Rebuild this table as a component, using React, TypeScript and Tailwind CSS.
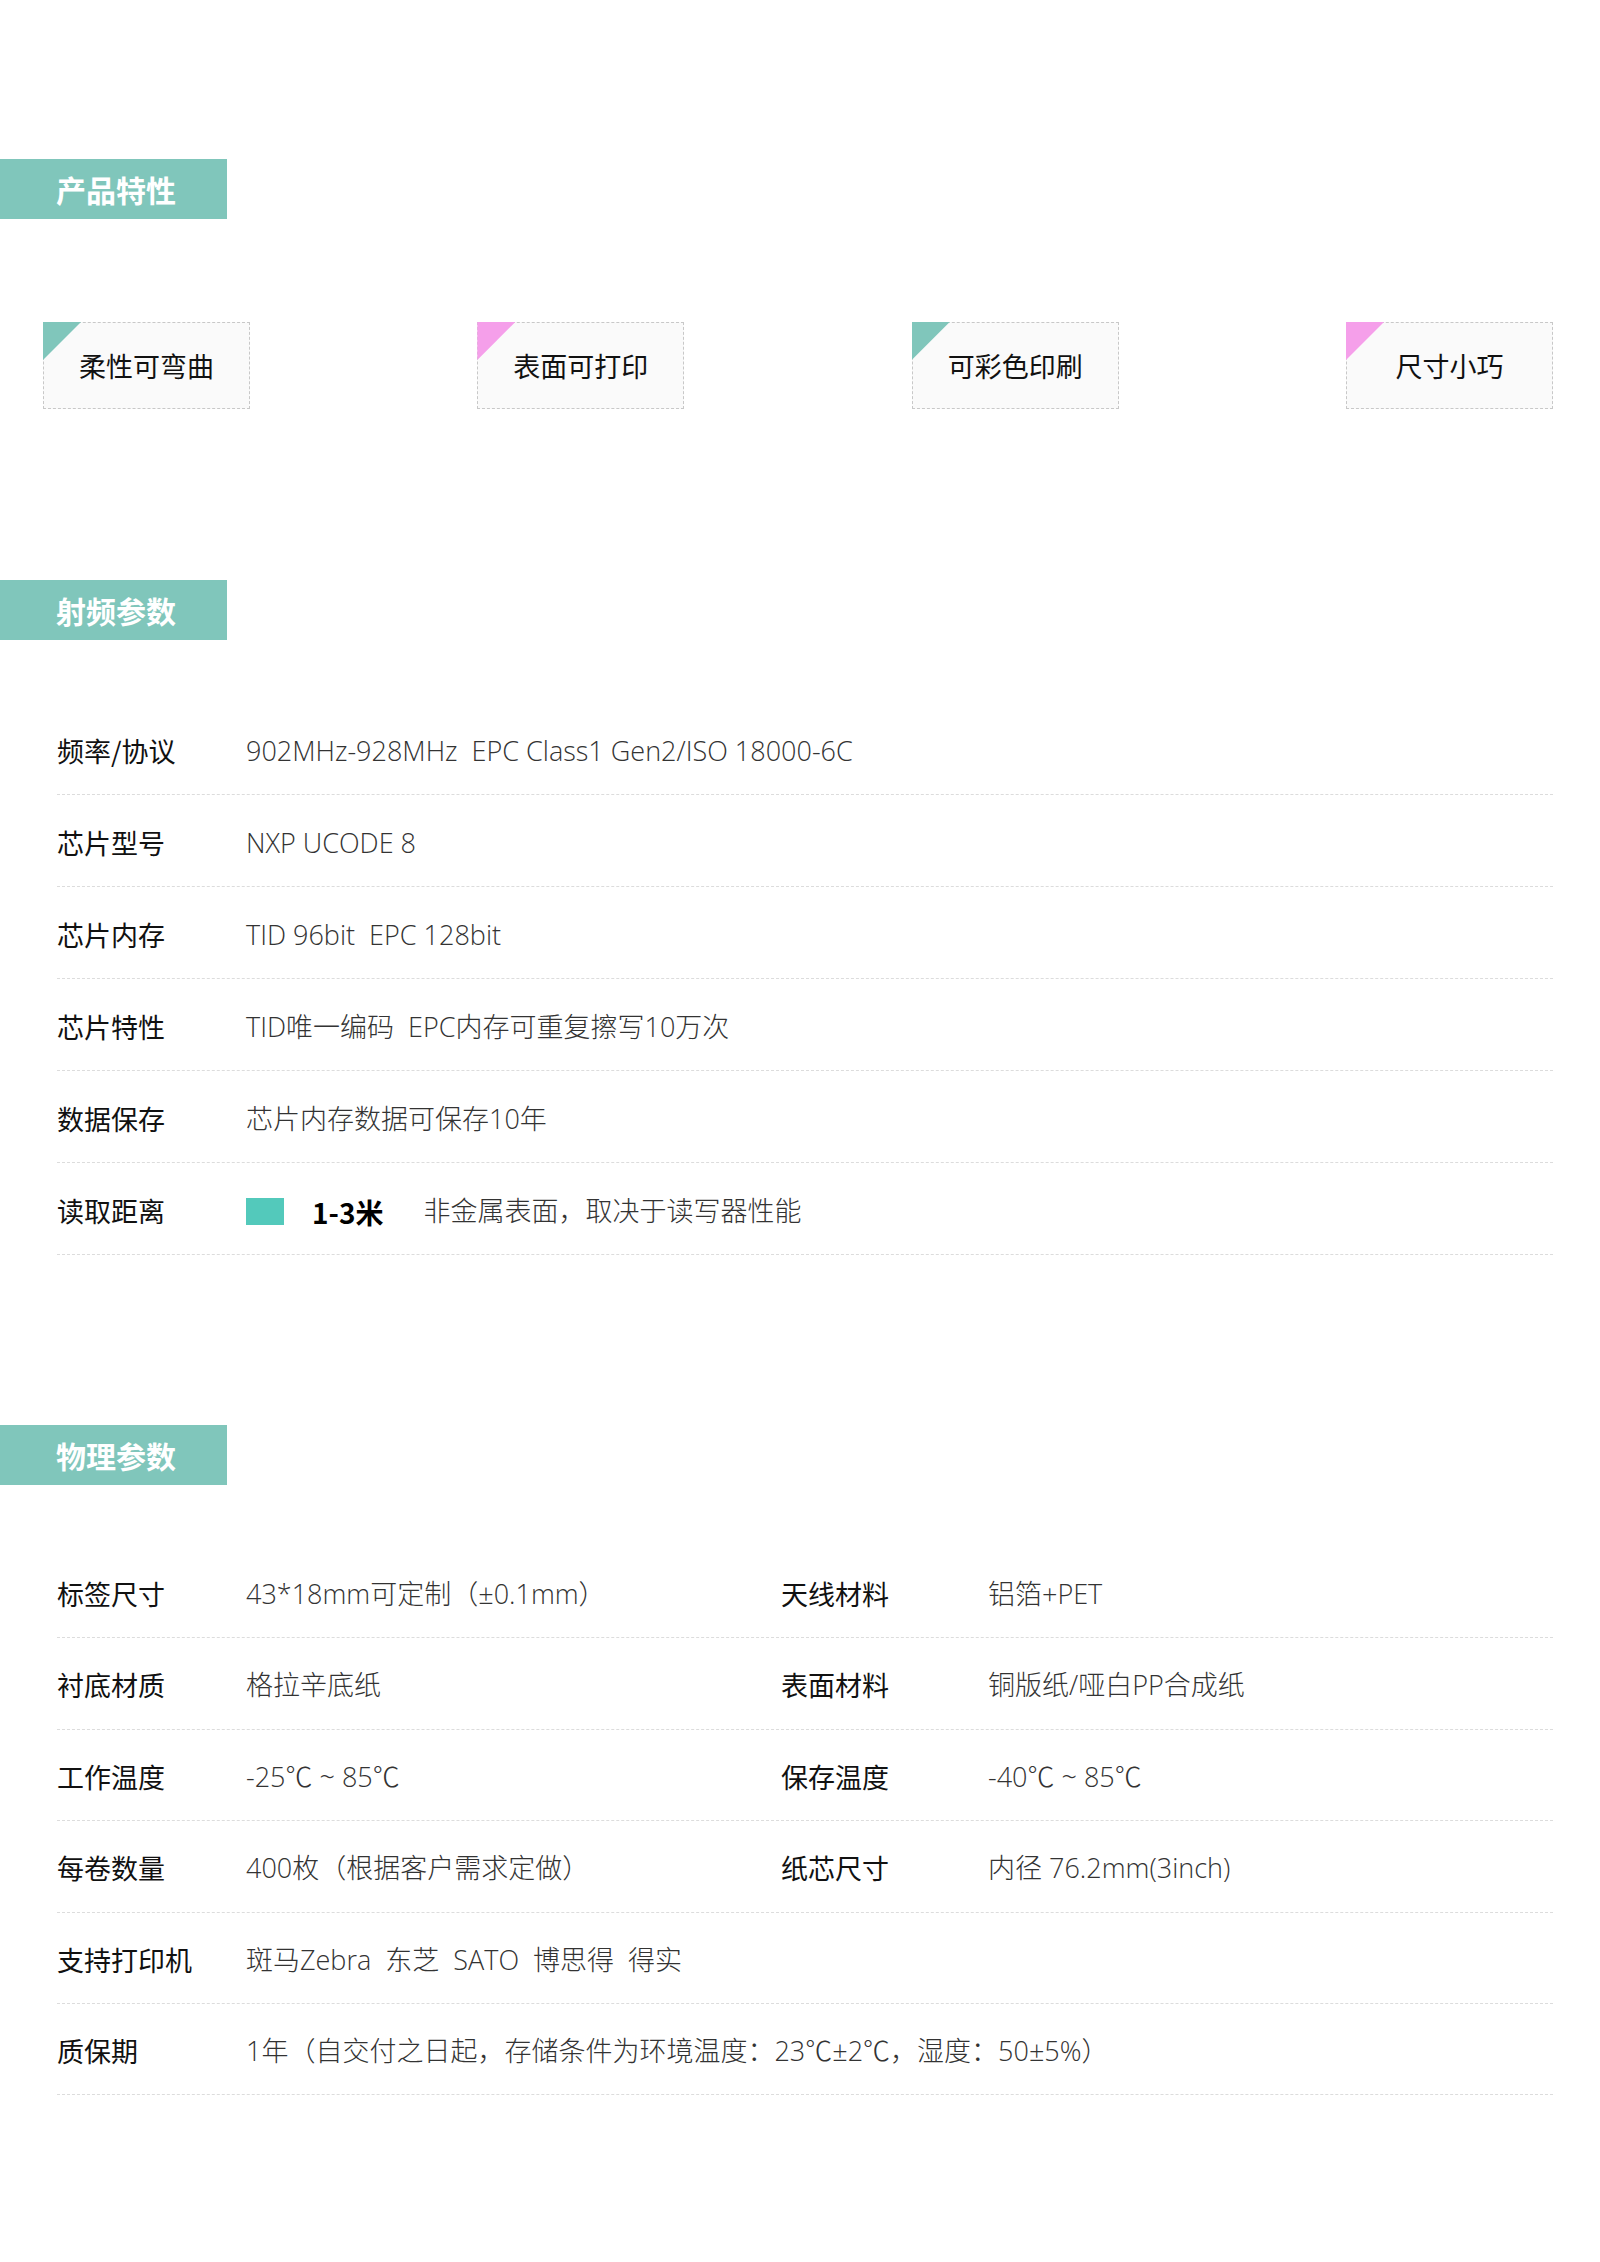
import React from "react";

const cjk = "font-['Noto_Sans_CJK_SC',sans-serif]";
const light = "font-['Open_Sans','Noto_Sans_CJK_SC',sans-serif] font-light";

function SectionTitle({ title }: { title: string }) {
  return (
    <div className="w-[227px] h-[60px] bg-[#80c6bb] flex items-center pl-[56px]">
      <span className={`${cjk} text-[30px] font-bold text-white leading-none`}>{title}</span>
    </div>
  );
}

const features = [
  { text: "柔性可弯曲", color: "bg-[#80c6bb]" },
  { text: "表面可打印", color: "bg-[#f59fea]" },
  { text: "可彩色印刷", color: "bg-[#80c6bb]" },
  { text: "尺寸小巧", color: "bg-[#f59fea]" },
];

const rfRows: { label: string; value: React.ReactNode }[] = [
  { label: "频率/协议", value: "902MHz-928MHz  EPC Class1 Gen2/ISO 18000-6C" },
  { label: "芯片型号", value: "NXP UCODE 8" },
  { label: "芯片内存", value: "TID 96bit  EPC 128bit" },
  { label: "芯片特性", value: "TID唯一编码  EPC内存可重复擦写10万次" },
  { label: "数据保存", value: "芯片内存数据可保存10年" },
];

const physRows: [string, string, string?, string?][] = [
  ["标签尺寸", "43*18mm可定制（±0.1mm）", "天线材料", "铝箔+PET"],
  ["衬底材质", "格拉辛底纸", "表面材料", "铜版纸/哑白PP合成纸"],
  ["工作温度", "-25℃ ~ 85℃", "保存温度", "-40℃ ~ 85℃"],
  ["每卷数量", "400枚（根据客户需求定做）", "纸芯尺寸", "内径 76.2mm(3inch)"],
  ["支持打印机", "斑马Zebra  东芝  SATO  博思得  得实"],
  ["质保期", "1年（自交付之日起，存储条件为环境温度：23℃±2℃，湿度：50±5%）"],
];

export default function App() {
  return (
    <div className="w-[1600px] h-[2262px] bg-white pt-[159px]">
      {/* 产品特性 */}
      <SectionTitle title="产品特性" />
      <div className="ml-[43px] w-[1510px] mt-[103px] flex justify-between">
        {features.map((f) => (
          <div
            key={f.text}
            className="relative w-[207px] h-[87px] bg-[#fafafa] border border-dashed border-[#c8c8c8] flex items-center justify-center"
          >
            <div className={`absolute -top-px -left-px w-[38px] h-[38px] ${f.color} [clip-path:polygon(0_0,100%_0,0_100%)]`} />
            <span className={`${cjk} text-[27px] text-[#111] leading-none`}>{f.text}</span>
          </div>
        ))}
      </div>

      {/* 射频参数 */}
      <div className="mt-[171px]">
        <SectionTitle title="射频参数" />
      </div>
      <div className="ml-[57px] w-[1496px] mt-[63px]">
        {rfRows.map((r) => (
          <div key={r.label} className="h-[92px] pt-[6px] flex items-center border-b border-dashed border-[#dcdcdc]">
            <span className={`${cjk} w-[189px] text-[27px] text-[#111]`}>{r.label}</span>
            <span className={`${light} text-[27px] text-[#333] whitespace-pre`}>{r.value}</span>
          </div>
        ))}
        <div className="h-[92px] pt-[6px] flex items-center border-b border-dashed border-[#dcdcdc]">
          <span className={`${cjk} w-[189px] text-[27px] text-[#111]`}>读取距离</span>
          <span className="w-[38px] h-[27px] bg-[#53c9bb]" />
          <span className={`${cjk} ml-[28px] text-[28px] font-bold text-black`}>1-3米</span>
          <span className={`${light} ml-[40px] text-[27px] text-[#333]`}>非金属表面，取决于读写器性能</span>
        </div>
      </div>

      {/* 物理参数 */}
      <div className="mt-[170px]">
        <SectionTitle title="物理参数" />
      </div>
      <div className="ml-[57px] w-[1496px] mt-[62px]">
        {physRows.map(([l1, v1, l2, v2]) => (
          <div
            key={l1}
            className="h-[91.4px] pt-[4px] grid grid-cols-[189px_535px_207px_1fr] items-center border-b border-dashed border-[#dcdcdc]"
          >
            <span className={`${cjk} text-[27px] text-[#111]`}>{l1}</span>
            <span className={`${light} text-[27px] text-[#333] whitespace-pre ${l2 ? "" : "col-span-3"}`}>{v1}</span>
            {l2 && <span className={`${cjk} text-[27px] text-[#111]`}>{l2}</span>}
            {v2 && <span className={`${light} text-[27px] text-[#333]`}>{v2}</span>}
          </div>
        ))}
      </div>
    </div>
  );
}
